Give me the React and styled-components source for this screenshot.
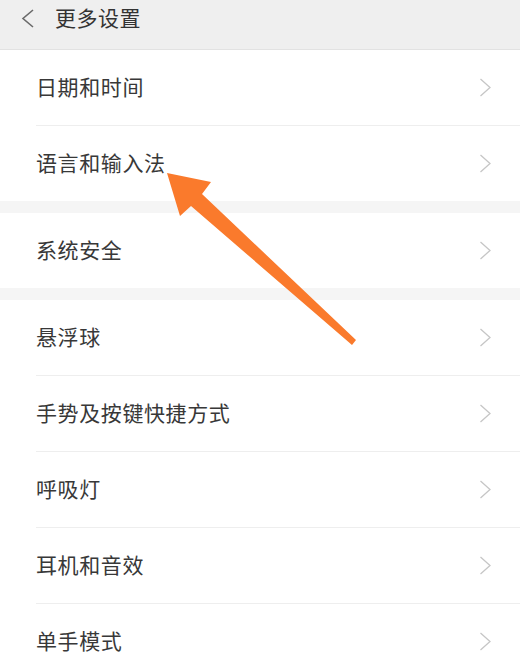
import React from 'react';
import styled, { createGlobalStyle } from 'styled-components';

const GlobalStyle = createGlobalStyle`
  html, body {
    margin: 0;
    padding: 0;
    background: #ffffff;
    overflow: hidden;
  }
  body {
    font-family: "Noto Sans CJK SC", "Noto Sans", sans-serif;
  }
`;

const Screen = styled.div`
  position: relative;
  width: 520px;
  height: 655px;
  overflow: hidden;
  background: #ffffff;
`;

const TopBar = styled.div`
  display: flex;
  align-items: center;
  height: 49px;
  padding: 0 0 0 21px;
  background: #efefef;
  border-bottom: 1px solid #e2e2e2;
  box-sizing: content-box;
`;

const BackButton = styled.span`
  display: flex;
  width: 34px;
  margin-top: -12px;
`;

const Title = styled.h1`
  margin: -15px 0 0;
  font-size: 21px;
  font-weight: 400;
  color: #333333;
  letter-spacing: 0.5px;
`;

const Group = styled.section`
  display: flex;
  flex-direction: column;
  background: #ffffff;
`;

const Gap = styled.div`
  height: 12px;
  background: #f5f5f5;
`;

const Row = styled.div`
  display: flex;
  align-items: center;
  justify-content: space-between;
  height: 75px;
  margin-left: 36px;
  padding-right: 28px;
  border-top: ${(p) => (p.$first ? 'none' : '1px solid #eeeeee')};
`;

const Label = styled.span`
  margin-top: -4px;
  font-size: 21px;
  color: #383838;
  letter-spacing: 0.6px;
`;

const Pointer = styled.svg`
  position: absolute;
  left: 0;
  top: 0;
  pointer-events: none;
`;

const Chevron = () => (
  <svg width="13" height="19" viewBox="0 0 13 19">
    <polyline points="1.5,1 11,9.5 1.5,18" fill="none" stroke="#c6c6c6" strokeWidth="1.3" />
  </svg>
);

const BackIcon = () => (
  <svg width="14" height="19" viewBox="0 0 14 19">
    <polyline points="12,1 2,9.5 12,18" fill="none" stroke="#6a6a6a" strokeWidth="1.6" />
  </svg>
);

const groups = [
  ['日期和时间', '语言和输入法'],
  ['系统安全'],
  ['悬浮球', '手势及按键快捷方式', '呼吸灯', '耳机和音效', '单手模式'],
];

export default function App() {
  return (
    <Screen>
      <GlobalStyle />
      <TopBar>
        <BackButton>
          <BackIcon />
        </BackButton>
        <Title>更多设置</Title>
      </TopBar>
      {groups.map((items, gi) => (
        <React.Fragment key={gi}>
          {gi > 0 && <Gap />}
          <Group>
            {items.map((label, i) => (
              <Row key={label} $first={i === 0}>
                <Label>{label}</Label>
                <Chevron />
              </Row>
            ))}
          </Group>
        </React.Fragment>
      ))}
      <Pointer width="520" height="655" viewBox="0 0 520 655">
        <polygon
          points="167,173 211,182 202,194 356,340 352,345 191,206 180,216"
          fill="#fa7a2c"
        />
      </Pointer>
    </Screen>
  );
}
